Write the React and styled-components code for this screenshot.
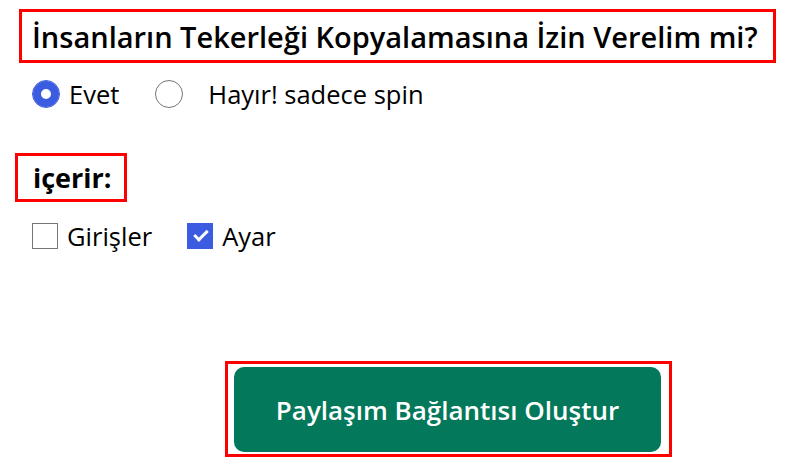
import React, { useState } from "react";
import styled, { createGlobalStyle } from "styled-components";

const GlobalStyle = createGlobalStyle`
  body {
    margin: 0;
    background: #ffffff;
    font-family: "Open Sans", "Noto Sans", sans-serif;
    color: #000000;
  }
`;

const Page = styled.div`
  display: flex;
  flex-direction: column;
  align-items: flex-start;
  padding: 9px 0 0 0;
`;

const Outlined = styled.div`
  border: 3px solid #ff0000;
  box-sizing: border-box;
`;

const TitleBox = styled(Outlined)`
  margin-left: 19px;
  width: 757px;
  height: 54px;
  padding: 0 0 0 10px;
  display: flex;
  align-items: center;
  font-size: 29px;
  font-weight: 600;
  white-space: nowrap;
`;

const SectionBox = styled(Outlined)`
  margin: ${props => props.top} 0 0 15px;
  width: 112px;
  height: 49px;
  padding: 0 0 0 15px;
  display: flex;
  align-items: center;
  font-size: 27px;
  font-weight: 700;
`;

const OptionRow = styled.div`
  display: flex;
  align-items: center;
  margin: ${props => props.top} 0 0 32px;
  height: 28px;
`;

const Option = styled.label`
  display: flex;
  align-items: center;
  gap: ${props => props.gap};
  margin-right: ${props => props.after};
  font-size: 25.5px;
  white-space: nowrap;
  cursor: pointer;
`;

const Radio = styled.input.attrs({ type: "radio" })`
  appearance: none;
  margin: 0;
  width: 28px;
  height: 28px;
  border-radius: 50%;
  border: 1px solid #767676;
  background: #ffffff;
  box-sizing: border-box;
  cursor: pointer;

  &:checked {
    border-color: #3b5ce0;
    box-shadow: inset 0 0 0 8px #3b5ce0;
  }
`;

const Checkbox = styled.input.attrs({ type: "checkbox" })`
  appearance: none;
  position: relative;
  margin: 0;
  width: 26px;
  height: 26px;
  border: 1px solid #767676;
  background: #ffffff;
  box-sizing: border-box;
  cursor: pointer;

  &:checked {
    border-color: #3b5ce0;
    background: #3b5ce0;
  }

  &:checked::after {
    content: "";
    position: absolute;
    left: 6px;
    top: 6px;
    width: 11px;
    height: 5px;
    border-left: 3px solid #ffffff;
    border-bottom: 3px solid #ffffff;
    transform: rotate(-45deg);
  }
`;

const ButtonFrame = styled(Outlined)`
  margin: 111px 0 0 225px;
  width: 447px;
  height: 96px;
  padding: 3px 8px 2px 6px;
`;

const ShareButton = styled.button`
  width: 427px;
  height: 85px;
  border: none;
  border-radius: 10px;
  background: #03785a;
  color: #ffffff;
  font-family: inherit;
  font-size: 26px;
  font-weight: 600;
  cursor: pointer;
`;

export default function App() {
  const [copy, setCopy] = useState("yes");
  const [inc, setInc] = useState({ entries: false, settings: true });

  return (
    <>
      <GlobalStyle />
      <Page>
        <TitleBox>İnsanların Tekerleği Kopyalamasına İzin Verelim mi?</TitleBox>

        <OptionRow top="17px">
          <Option gap="9px" after="36px">
            <Radio name="copy" checked={copy === "yes"} onChange={() => setCopy("yes")} />
            Evet
          </Option>
          <Option gap="25px" after="0">
            <Radio name="copy" checked={copy === "no"} onChange={() => setCopy("no")} />
            Hayır! sadece spin
          </Option>
        </OptionRow>

        <SectionBox top="45px">içerir:</SectionBox>

        <OptionRow top="20px">
          <Option gap="9px" after="35px">
            <Checkbox checked={inc.entries} onChange={() => setInc({ ...inc, entries: !inc.entries })} />
            Girişler
          </Option>
          <Option gap="9px" after="0">
            <Checkbox checked={inc.settings} onChange={() => setInc({ ...inc, settings: !inc.settings })} />
            Ayar
          </Option>
        </OptionRow>

        <ButtonFrame>
          <ShareButton>Paylaşım Bağlantısı Oluştur</ShareButton>
        </ButtonFrame>
      </Page>
    </>
  );
}
